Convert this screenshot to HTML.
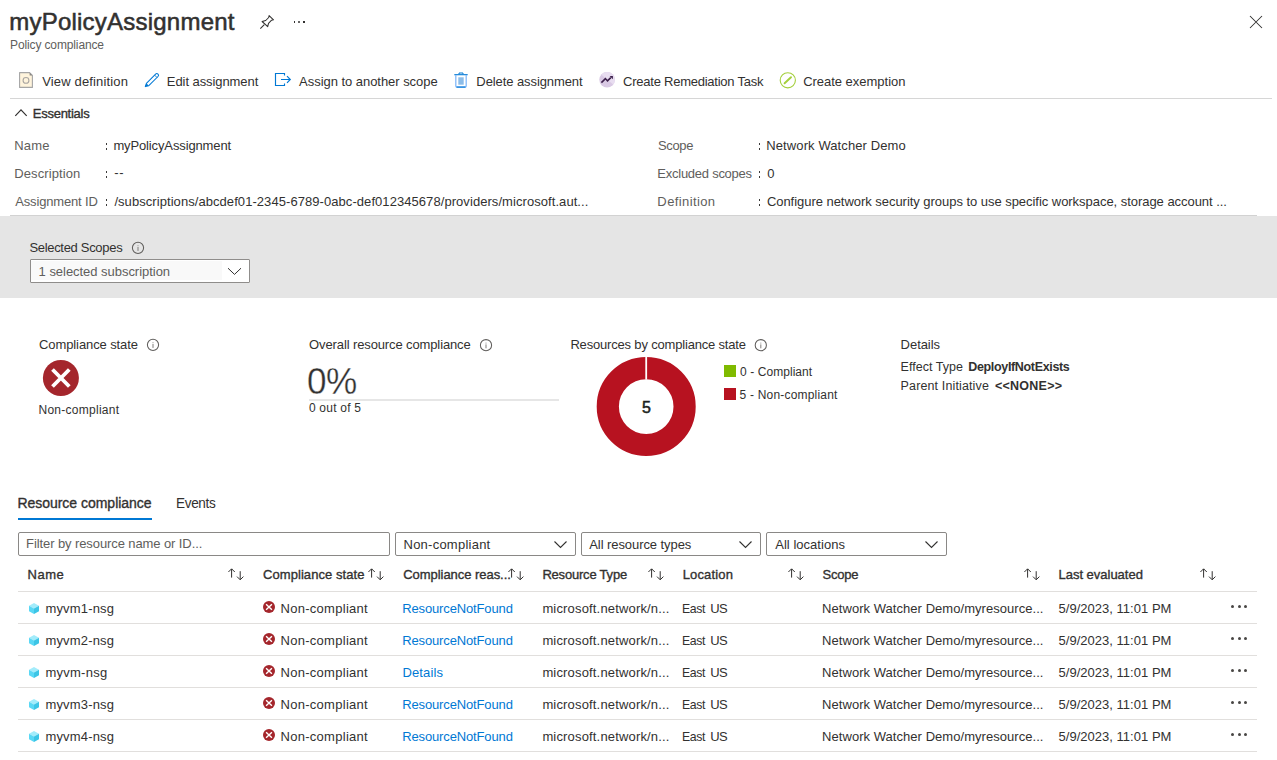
<!DOCTYPE html>
<html><head><meta charset="utf-8">
<style>
html,body{margin:0;padding:0;background:#fff;}
body{width:1277px;height:760px;position:relative;overflow:hidden;font-family:"Liberation Sans",sans-serif;}
.t{position:absolute;white-space:nowrap;line-height:1;transform-origin:0 0;}
.sb{-webkit-text-stroke:0.35px currentColor;}
.b{font-weight:bold;}
.l{-webkit-text-stroke:0.35px #fff;}
.sb2{-webkit-text-stroke:0.55px currentColor;}
.a{position:absolute;}
svg{position:absolute;overflow:visible;}
</style></head><body>
<!-- backgrounds & lines -->
<div class="a" style="left:0;top:216px;width:1277px;height:82px;background:#e5e5e5"></div>
<div class="a" style="left:10px;top:98px;width:1262px;height:1px;background:#d6d6d6"></div>
<div class="a" style="left:10px;top:215px;width:1247px;height:1px;background:#d2d2d2"></div>

<!-- title icons -->
<svg style="left:258px;top:13px" width="18" height="18" viewBox="0 0 18 18">
 <path d="M2.3 15.6 L6.3 11.6" stroke="#323130" stroke-width="1.05" fill="none"/>
 <path d="M4.1 8.5 L7.7 7.5 L10.7 4.5 L11.1 2.6 L15.5 6.8 L13.6 7.2 L10.5 10.3 L9.7 13.7 Z" stroke="#323130" stroke-width="1.05" fill="none" stroke-linejoin="round"/>
</svg>
<div class="a" style="left:293.8px;top:21px;width:1.6px;height:2.2px;background:#323130"></div>
<div class="a" style="left:298.3px;top:21px;width:1.8px;height:2.2px;background:#666"></div>
<div class="a" style="left:303px;top:21px;width:1.6px;height:2.2px;background:#323130"></div>
<svg style="left:1249px;top:15px" width="14" height="14" viewBox="0 0 14 14">
 <path d="M1 1 L13 13 M13 1 L1 13" stroke="#323130" stroke-width="1.05" fill="none"/>
</svg>

<!-- toolbar icons -->
<svg style="left:19px;top:72px" width="14" height="16" viewBox="0 0 14 16">
 <path d="M0.6 0.6 H10.6 L13.4 3.4 V15.4 H0.6 Z" fill="#fff4dc" stroke="#a5a5a5" stroke-width="1.1" stroke-linejoin="round"/>
 <path d="M10.6 0.6 L13.4 3.4 H10.6 Z" fill="#8a8886"/>
 <circle cx="7" cy="8.4" r="2.9" fill="none" stroke="#aaa6a2" stroke-width="1.1"/>
</svg>
<svg style="left:144px;top:72px" width="16" height="16" viewBox="0 0 16 16">
 <path d="M1.3 14.6 L2.4 11.3 L11.6 2.1 A1.55 1.55 0 0 1 14 4.5 L4.8 13.7 Z" fill="none" stroke="#0078d4" stroke-width="1.05" stroke-linejoin="round"/>
 <path d="M10.6 3.1 L13 5.5" stroke="#0078d4" stroke-width="0.9"/>
 <path d="M2.4 11.3 L4.8 13.7 L1.3 14.6 Z" fill="#0078d4"/>
</svg>
<svg style="left:274px;top:72px" width="18" height="15" viewBox="0 0 18 15">
 <path d="M10.5 3.5 V1.5 H1.5 V13.5 H10.5 V11.5" fill="none" stroke="#0078d4" stroke-width="1.15"/>
 <path d="M7 7.5 H16.3 M13 4.2 L16.3 7.5 L13 10.8" fill="none" stroke="#0078d4" stroke-width="1.15"/>
</svg>
<svg style="left:454px;top:72px" width="14" height="17" viewBox="0 0 14 17">
 <path d="M5 2.2 V1 H9 V2.2" fill="none" stroke="#0078d4" stroke-width="1"/>
 <path d="M0.3 2.7 H13.7" stroke="#0078d4" stroke-width="1.1"/>
 <path d="M1.8 3 V14 Q1.8 15 2.8 15 H11.2 Q12.2 15 12.2 14 V3" fill="none" stroke="#83b9f9" stroke-width="1.3"/>
 <path d="M2.5 15.1 H11.5" stroke="#0078d4" stroke-width="1.1"/>
 <rect x="4.3" y="5.3" width="5.4" height="7.4" fill="#8cbce8"/>
</svg>
<svg style="left:599px;top:72px" width="17" height="17" viewBox="0 0 17 17">
 <defs><clipPath id="rcc"><circle cx="8.1" cy="7.8" r="7.8"/></clipPath></defs>
 <circle cx="8.1" cy="7.8" r="7.8" fill="#d9c9e4"/>
 <path d="M-1 0.06 L17 14.7 L17 -1 L-1 -1 Z" fill="#e8ddf0" clip-path="url(#rcc)"/>
 <path d="M2.4 10.6 L6.4 6.6 L8.5 8.9 L11.8 5.6" fill="none" stroke="#3b1f4a" stroke-width="1.55"/>
 <path d="M10.6 4 H13.9 V7.3 Z" fill="#3b1f4a"/>
</svg>
<svg style="left:779px;top:72px" width="18" height="17" viewBox="0 0 18 17">
 <circle cx="8.8" cy="8.3" r="7.6" fill="none" stroke="#a4cf3c" stroke-width="1.1"/>
 <path d="M5.6 11.3 L12 5.2" stroke="#a4cf3c" stroke-width="1.9" stroke-linecap="round"/>
</svg>

<!-- essentials chevron -->
<svg style="left:14px;top:108px" width="14" height="9" viewBox="0 0 14 9">
 <path d="M1.3 7.8 L7 1.8 L12.7 7.8" fill="none" stroke="#323130" stroke-width="1.2"/>
</svg>

<!-- selected scopes dropdown -->
<div class="a" style="left:30px;top:259px;width:218px;height:22px;border:1px solid #8f8d8b;background:#fff;border-radius:1px"></div>
<div class="a" style="left:31px;top:261px;width:191px;height:19px;background:#f9f9f9"></div>
<svg style="left:227px;top:267px" width="16" height="10" viewBox="0 0 16 10">
 <path d="M1 1.2 L7.5 7.4 L14 1.2" fill="none" stroke="#323130" stroke-width="1"/>
</svg>

<!-- info icons -->
<svg style="left:131px;top:241px" width="14" height="14" viewBox="0 0 14 14"><circle cx="7" cy="6.8" r="5.6" fill="none" stroke="#605e5c" stroke-width="1.05"/><rect x="6.45" y="6" width="1.1" height="3.9" fill="#8a8886"/><rect x="6.45" y="4.2" width="1.1" height="1" fill="#a19f9d"/></svg>
<svg style="left:146px;top:338px" width="14" height="14" viewBox="0 0 14 14"><circle cx="7" cy="6.8" r="5.6" fill="none" stroke="#605e5c" stroke-width="1.05"/><rect x="6.45" y="6" width="1.1" height="3.9" fill="#8a8886"/><rect x="6.45" y="4.2" width="1.1" height="1" fill="#a19f9d"/></svg>
<svg style="left:479px;top:338px" width="14" height="14" viewBox="0 0 14 14"><circle cx="7" cy="7.2" r="5.6" fill="none" stroke="#605e5c" stroke-width="1.05"/><rect x="6.45" y="6.4" width="1.1" height="3.9" fill="#8a8886"/><rect x="6.45" y="4.6" width="1.1" height="1" fill="#a19f9d"/></svg>
<svg style="left:754px;top:338px" width="14" height="14" viewBox="0 0 14 14"><circle cx="6.8" cy="7.2" r="5.6" fill="none" stroke="#605e5c" stroke-width="1.05"/><rect x="6.25" y="6.4" width="1.1" height="3.9" fill="#8a8886"/><rect x="6.25" y="4.6" width="1.1" height="1" fill="#a19f9d"/></svg>

<!-- compliance state big icon -->
<svg style="left:42px;top:360px" width="38" height="38" viewBox="0 0 38 38">
 <circle cx="18.9" cy="18" r="18" fill="#a4262c"/>
 <path d="M10.5 9.5 L27.3 26.5 M27.3 9.5 L10.5 26.5" stroke="#fff" stroke-width="3.8"/>
</svg>

<!-- progress track -->
<div class="a" style="left:309px;top:399px;width:250px;height:2px;background:#e6e6e6"></div>

<!-- donut -->
<svg style="left:596px;top:357px" width="101" height="101" viewBox="0 0 101 101">
 <circle cx="50.2" cy="49.6" r="38.4" fill="none" stroke="#b71220" stroke-width="22.2"/>
 <rect x="49.3" y="0" width="1.8" height="22.6" fill="#fff"/>
</svg>

<!-- legend -->
<div class="a" style="left:724px;top:365px;width:12px;height:12px;background:#7fba00"></div>
<div class="a" style="left:724px;top:388px;width:12px;height:12px;background:#b71220"></div>

<!-- tabs -->
<div class="a" style="left:18px;top:518px;width:134px;height:2px;background:#0078d4"></div>

<!-- filters -->
<div class="a" style="left:18px;top:532px;width:370px;height:22px;border:1px solid #8a8886;border-radius:2px"></div>
<div class="a" style="left:395px;top:532px;width:179px;height:22px;border:1px solid #8a8886;border-radius:2px"></div>
<div class="a" style="left:581px;top:532px;width:178px;height:22px;border:1px solid #8a8886;border-radius:2px"></div>
<div class="a" style="left:766px;top:532px;width:179px;height:22px;border:1px solid #8a8886;border-radius:2px"></div>
<svg style="left:554px;top:541px" width="14" height="8" viewBox="0 0 14 8"><path d="M0.5 0.5 L6.5 6.5 L12.5 0.5" fill="none" stroke="#323130" stroke-width="1.1"/></svg>
<svg style="left:739px;top:541px" width="14" height="8" viewBox="0 0 14 8"><path d="M0.5 0.5 L6.5 6.5 L12.5 0.5" fill="none" stroke="#323130" stroke-width="1.1"/></svg>
<svg style="left:925px;top:541px" width="14" height="8" viewBox="0 0 14 8"><path d="M0.5 0.5 L6.5 6.5 L12.5 0.5" fill="none" stroke="#323130" stroke-width="1.1"/></svg>
<!-- table -->
<div class="a" style="left:18px;top:591px;width:1239px;height:1px;background:#e1dfdd"></div>
<div class="a" style="left:18px;top:623px;width:1239px;height:1px;background:#e1dfdd"></div>
<div class="a" style="left:18px;top:655px;width:1239px;height:1px;background:#e1dfdd"></div>
<div class="a" style="left:18px;top:687px;width:1239px;height:1px;background:#e1dfdd"></div>
<div class="a" style="left:18px;top:719px;width:1239px;height:1px;background:#e1dfdd"></div>
<div class="a" style="left:18px;top:751px;width:1239px;height:1px;background:#e1dfdd"></div>
<svg style="left:228.1px;top:568px" width="17" height="14" viewBox="0 0 17 14"><path d="M3.6 9.6 V1 M0.4 4 L3.6 0.8 L6.8 4" fill="none" stroke="#323130" stroke-width="1"/><path d="M12.2 3.2 V11.6 M9 8.6 L12.2 11.8 L15.4 8.6" fill="none" stroke="#323130" stroke-width="1"/></svg>
<svg style="left:368.1px;top:568px" width="17" height="14" viewBox="0 0 17 14"><path d="M3.6 9.6 V1 M0.4 4 L3.6 0.8 L6.8 4" fill="none" stroke="#323130" stroke-width="1"/><path d="M12.2 3.2 V11.6 M9 8.6 L12.2 11.8 L15.4 8.6" fill="none" stroke="#323130" stroke-width="1"/></svg>
<svg style="left:508.1px;top:568px" width="17" height="14" viewBox="0 0 17 14"><path d="M3.6 9.6 V1 M0.4 4 L3.6 0.8 L6.8 4" fill="none" stroke="#323130" stroke-width="1"/><path d="M12.2 3.2 V11.6 M9 8.6 L12.2 11.8 L15.4 8.6" fill="none" stroke="#323130" stroke-width="1"/></svg>
<svg style="left:648.1px;top:568px" width="17" height="14" viewBox="0 0 17 14"><path d="M3.6 9.6 V1 M0.4 4 L3.6 0.8 L6.8 4" fill="none" stroke="#323130" stroke-width="1"/><path d="M12.2 3.2 V11.6 M9 8.6 L12.2 11.8 L15.4 8.6" fill="none" stroke="#323130" stroke-width="1"/></svg>
<svg style="left:788.1px;top:568px" width="17" height="14" viewBox="0 0 17 14"><path d="M3.6 9.6 V1 M0.4 4 L3.6 0.8 L6.8 4" fill="none" stroke="#323130" stroke-width="1"/><path d="M12.2 3.2 V11.6 M9 8.6 L12.2 11.8 L15.4 8.6" fill="none" stroke="#323130" stroke-width="1"/></svg>
<svg style="left:1024.1px;top:568px" width="17" height="14" viewBox="0 0 17 14"><path d="M3.6 9.6 V1 M0.4 4 L3.6 0.8 L6.8 4" fill="none" stroke="#323130" stroke-width="1"/><path d="M12.2 3.2 V11.6 M9 8.6 L12.2 11.8 L15.4 8.6" fill="none" stroke="#323130" stroke-width="1"/></svg>
<svg style="left:1200.1px;top:568px" width="17" height="14" viewBox="0 0 17 14"><path d="M3.6 9.6 V1 M0.4 4 L3.6 0.8 L6.8 4" fill="none" stroke="#323130" stroke-width="1"/><path d="M12.2 3.2 V11.6 M9 8.6 L12.2 11.8 L15.4 8.6" fill="none" stroke="#323130" stroke-width="1"/></svg>
<svg style="left:28px;top:602px" width="12" height="13" viewBox="0 0 12 13"><path d="M6 1 L11 3.8 L6 6.6 L1 3.8 Z" fill="#a3ecfb"/><path d="M1 3.8 L6 6.6 V12 L1 9.2 Z" fill="#5ad8f5"/><path d="M11 3.8 L6 6.6 V12 L11 9.2 Z" fill="#3cc5e6"/></svg>
<svg style="left:263px;top:601px" width="13" height="13" viewBox="0 0 13 13"><circle cx="6" cy="6" r="6" fill="#a4262c"/><path d="M3.1 3.3 L8.9 8.7 M8.9 3.3 L3.1 8.7" stroke="#fff" stroke-width="1.45"/></svg>
<div class="a" style="left:1231.2px;top:605px;width:3px;height:3px;border-radius:1.5px;background:#484644"></div>
<div class="a" style="left:1237.5px;top:605px;width:3px;height:3px;border-radius:1.5px;background:#484644"></div>
<div class="a" style="left:1243.8px;top:605px;width:3px;height:3px;border-radius:1.5px;background:#484644"></div>
<svg style="left:28px;top:634px" width="12" height="13" viewBox="0 0 12 13"><path d="M6 1 L11 3.8 L6 6.6 L1 3.8 Z" fill="#a3ecfb"/><path d="M1 3.8 L6 6.6 V12 L1 9.2 Z" fill="#5ad8f5"/><path d="M11 3.8 L6 6.6 V12 L11 9.2 Z" fill="#3cc5e6"/></svg>
<svg style="left:263px;top:633px" width="13" height="13" viewBox="0 0 13 13"><circle cx="6" cy="6" r="6" fill="#a4262c"/><path d="M3.1 3.3 L8.9 8.7 M8.9 3.3 L3.1 8.7" stroke="#fff" stroke-width="1.45"/></svg>
<div class="a" style="left:1231.2px;top:637px;width:3px;height:3px;border-radius:1.5px;background:#484644"></div>
<div class="a" style="left:1237.5px;top:637px;width:3px;height:3px;border-radius:1.5px;background:#484644"></div>
<div class="a" style="left:1243.8px;top:637px;width:3px;height:3px;border-radius:1.5px;background:#484644"></div>
<svg style="left:28px;top:666px" width="12" height="13" viewBox="0 0 12 13"><path d="M6 1 L11 3.8 L6 6.6 L1 3.8 Z" fill="#a3ecfb"/><path d="M1 3.8 L6 6.6 V12 L1 9.2 Z" fill="#5ad8f5"/><path d="M11 3.8 L6 6.6 V12 L11 9.2 Z" fill="#3cc5e6"/></svg>
<svg style="left:263px;top:665px" width="13" height="13" viewBox="0 0 13 13"><circle cx="6" cy="6" r="6" fill="#a4262c"/><path d="M3.1 3.3 L8.9 8.7 M8.9 3.3 L3.1 8.7" stroke="#fff" stroke-width="1.45"/></svg>
<div class="a" style="left:1231.2px;top:669px;width:3px;height:3px;border-radius:1.5px;background:#484644"></div>
<div class="a" style="left:1237.5px;top:669px;width:3px;height:3px;border-radius:1.5px;background:#484644"></div>
<div class="a" style="left:1243.8px;top:669px;width:3px;height:3px;border-radius:1.5px;background:#484644"></div>
<svg style="left:28px;top:698px" width="12" height="13" viewBox="0 0 12 13"><path d="M6 1 L11 3.8 L6 6.6 L1 3.8 Z" fill="#a3ecfb"/><path d="M1 3.8 L6 6.6 V12 L1 9.2 Z" fill="#5ad8f5"/><path d="M11 3.8 L6 6.6 V12 L11 9.2 Z" fill="#3cc5e6"/></svg>
<svg style="left:263px;top:697px" width="13" height="13" viewBox="0 0 13 13"><circle cx="6" cy="6" r="6" fill="#a4262c"/><path d="M3.1 3.3 L8.9 8.7 M8.9 3.3 L3.1 8.7" stroke="#fff" stroke-width="1.45"/></svg>
<div class="a" style="left:1231.2px;top:701px;width:3px;height:3px;border-radius:1.5px;background:#484644"></div>
<div class="a" style="left:1237.5px;top:701px;width:3px;height:3px;border-radius:1.5px;background:#484644"></div>
<div class="a" style="left:1243.8px;top:701px;width:3px;height:3px;border-radius:1.5px;background:#484644"></div>
<svg style="left:28px;top:730px" width="12" height="13" viewBox="0 0 12 13"><path d="M6 1 L11 3.8 L6 6.6 L1 3.8 Z" fill="#a3ecfb"/><path d="M1 3.8 L6 6.6 V12 L1 9.2 Z" fill="#5ad8f5"/><path d="M11 3.8 L6 6.6 V12 L11 9.2 Z" fill="#3cc5e6"/></svg>
<svg style="left:263px;top:729px" width="13" height="13" viewBox="0 0 13 13"><circle cx="6" cy="6" r="6" fill="#a4262c"/><path d="M3.1 3.3 L8.9 8.7 M8.9 3.3 L3.1 8.7" stroke="#fff" stroke-width="1.45"/></svg>
<div class="a" style="left:1231.2px;top:733px;width:3px;height:3px;border-radius:1.5px;background:#484644"></div>
<div class="a" style="left:1237.5px;top:733px;width:3px;height:3px;border-radius:1.5px;background:#484644"></div>
<div class="a" style="left:1243.8px;top:733px;width:3px;height:3px;border-radius:1.5px;background:#484644"></div>
<!-- colons -->
<div class="a" style="left:105.7px;top:142.7px;width:1.2px;height:2px;background:#3b3a39"></div>
<div class="a" style="left:105.7px;top:147.7px;width:1.2px;height:2px;background:#3b3a39"></div>
<div class="a" style="left:759.3px;top:142.7px;width:1.2px;height:2px;background:#3b3a39"></div>
<div class="a" style="left:759.3px;top:147.7px;width:1.2px;height:2px;background:#3b3a39"></div>
<div class="a" style="left:105.7px;top:170.9px;width:1.2px;height:2px;background:#3b3a39"></div>
<div class="a" style="left:105.7px;top:175.9px;width:1.2px;height:2px;background:#3b3a39"></div>
<div class="a" style="left:759.3px;top:170.9px;width:1.2px;height:2px;background:#3b3a39"></div>
<div class="a" style="left:759.3px;top:175.9px;width:1.2px;height:2px;background:#3b3a39"></div>
<div class="a" style="left:105.7px;top:199.1px;width:1.2px;height:2px;background:#3b3a39"></div>
<div class="a" style="left:105.7px;top:204.1px;width:1.2px;height:2px;background:#3b3a39"></div>
<div class="a" style="left:759.3px;top:199.1px;width:1.2px;height:2px;background:#3b3a39"></div>
<div class="a" style="left:759.3px;top:204.1px;width:1.2px;height:2px;background:#3b3a39"></div>

<div id="t0" class="t sb2" style="left:9.24px;top:9.68px;font-size:24px;color:#323130;letter-spacing:0.224px">myPolicyAssignment</div>
<div id="t1" class="t" style="left:10.00px;top:39.14px;font-size:12px;color:#605e5c;letter-spacing:-0.125px">Policy compliance</div>
<div id="t2" class="t" style="left:42.24px;top:75.00px;font-size:13px;color:#323130;letter-spacing:0.150px">View definition</div>
<div id="t3" class="t" style="left:166.86px;top:75.00px;font-size:13px;color:#323130;letter-spacing:-0.079px">Edit assignment</div>
<div id="t4" class="t" style="left:299.12px;top:75.00px;font-size:13px;color:#323130;letter-spacing:-0.041px">Assign to another scope</div>
<div id="t5" class="t" style="left:476.36px;top:75.00px;font-size:13px;color:#323130;letter-spacing:-0.088px">Delete assignment</div>
<div id="t6" class="t" style="left:623.10px;top:75.00px;font-size:13px;color:#323130;letter-spacing:-0.245px">Create Remediation Task</div>
<div id="t7" class="t" style="left:803.14px;top:75.00px;font-size:13px;color:#323130;letter-spacing:-0.020px">Create exemption</div>
<div id="t8" class="t sb" style="left:32.76px;top:106.90px;font-size:13px;color:#323130;letter-spacing:-0.256px">Essentials</div>
<div id="t9" class="t" style="left:14.24px;top:138.70px;font-size:13px;color:#605e5c;letter-spacing:0.200px">Name</div>
<div id="t10" class="t" style="left:14.24px;top:166.90px;font-size:13px;color:#605e5c;letter-spacing:0.100px">Description</div>
<div id="t11" class="t" style="left:15.24px;top:195.10px;font-size:13px;color:#605e5c;letter-spacing:-0.158px">Assignment ID</div>
<div id="t12" class="t" style="left:657.76px;top:138.70px;font-size:13px;color:#605e5c;letter-spacing:-0.351px;transform:scaleX(0.9972)">Scope</div>
<div id="t13" class="t" style="left:657.36px;top:166.90px;font-size:13px;color:#605e5c;letter-spacing:-0.257px">Excluded scopes</div>
<div id="t14" class="t" style="left:657.36px;top:195.10px;font-size:13px;color:#605e5c;letter-spacing:0.389px">Definition</div>
<div id="t15" class="t" style="left:113.38px;top:138.70px;font-size:13px;color:#323130;letter-spacing:-0.129px">myPolicyAssignment</div>
<div id="t16" class="t" style="left:114.30px;top:165.90px;font-size:13px;color:#323130;letter-spacing:0.600px">--</div>
<div id="t17" class="t" style="left:114.38px;top:195.10px;font-size:13px;color:#323130;letter-spacing:0.064px">/subscriptions/abcdef01-2345-6789-0abc-def012345678/providers/microsoft.aut...</div>
<div id="t18" class="t" style="left:766.28px;top:138.70px;font-size:13px;color:#323130;letter-spacing:0.105px">Network Watcher Demo</div>
<div id="t19" class="t" style="left:767.14px;top:166.90px;font-size:13px;color:#323130">0</div>
<div id="t20" class="t" style="left:766.88px;top:195.10px;font-size:13px;color:#323130;letter-spacing:-0.039px">Configure network security groups to use specific workspace, storage account ...</div>
<div id="t21" class="t" style="left:29.38px;top:241.20px;font-size:13px;color:#323130;letter-spacing:-0.307px">Selected Scopes</div>
<div id="t22" class="t" style="left:38.62px;top:265.00px;font-size:13px;color:#605e5c;letter-spacing:-0.036px">1 selected subscription</div>
<div id="t23" class="t" style="left:39.10px;top:338.00px;font-size:13px;color:#323130;letter-spacing:-0.107px">Compliance state</div>
<div id="t24" class="t" style="left:309.10px;top:338.00px;font-size:13px;color:#323130;letter-spacing:-0.119px">Overall resource compliance</div>
<div id="t25" class="t" style="left:570.38px;top:338.00px;font-size:13px;color:#323130;letter-spacing:-0.179px">Resources by compliance state</div>
<div id="t26" class="t" style="left:900.62px;top:337.80px;font-size:13px;color:#323130;letter-spacing:-0.050px">Details</div>
<div id="t27" class="t" style="left:38.50px;top:403.74px;font-size:12px;color:#323130;letter-spacing:0.267px">Non-compliant</div>
<div id="t28" class="t l" style="left:307.36px;top:364.00px;font-size:36.5px;color:#323130;letter-spacing:-0.436px;transform:scaleX(0.9621)">0%</div>
<div id="t29" class="t" style="left:308.90px;top:401.84px;font-size:12px;color:#323130;letter-spacing:0.233px">0 out of 5</div>
<div id="t30" class="t" style="left:740.12px;top:366.04px;font-size:12px;color:#323130;letter-spacing:0.058px">0 - Compliant</div>
<div id="t31" class="t" style="left:739.52px;top:388.59px;font-size:12px;color:#323130;letter-spacing:0.200px">5 - Non-compliant</div>
<div id="t32" class="t" style="left:900.62px;top:361.12px;font-size:12.5px;color:#323130;letter-spacing:0.020px">Effect Type</div>
<div id="t33" class="t b" style="left:968.26px;top:361.12px;font-size:12.5px;color:#323130;letter-spacing:-0.337px">DeployIfNotExists</div>
<div id="t34" class="t" style="left:900.62px;top:379.72px;font-size:12.5px;color:#323130;letter-spacing:0.131px">Parent Initiative</div>
<div id="t35" class="t b" style="left:995.02px;top:379.72px;font-size:12.5px;color:#323130;letter-spacing:0.243px">&lt;&lt;NONE&gt;&gt;</div>
<div id="t36" class="t sb2" style="left:641.98px;top:400.46px;font-size:16px;color:#201f1e">5</div>
<div id="t37" class="t sb" style="left:17.38px;top:495.85px;font-size:14px;color:#323130;letter-spacing:-0.022px">Resource compliance</div>
<div id="t38" class="t" style="left:175.88px;top:495.85px;font-size:14px;color:#323130;letter-spacing:-0.353px;transform:scaleX(0.9691)">Events</div>
<div id="t39" class="t" style="left:26.12px;top:536.90px;font-size:13px;color:#605e5c;letter-spacing:-0.097px">Filter by resource name or ID...</div>
<div id="t40" class="t" style="left:403.50px;top:537.80px;font-size:13px;color:#323130;letter-spacing:0.242px">Non-compliant</div>
<div id="t41" class="t" style="left:589.28px;top:537.80px;font-size:13px;color:#323130;letter-spacing:-0.076px">All resource types</div>
<div id="t42" class="t" style="left:775.28px;top:537.80px;font-size:13px;color:#323130;letter-spacing:0.025px">All locations</div>
<div id="t43" class="t sb" style="left:27.62px;top:568.30px;font-size:13px;color:#323130;letter-spacing:0.467px">Name</div>
<div id="t44" class="t sb" style="left:262.98px;top:568.30px;font-size:13px;color:#323130;letter-spacing:0.073px">Compliance state</div>
<div id="t45" class="t sb" style="left:403.24px;top:568.30px;font-size:13px;color:#323130;letter-spacing:-0.044px">Compliance reas...</div>
<div id="t46" class="t sb" style="left:542.38px;top:568.30px;font-size:13px;color:#323130;letter-spacing:-0.200px">Resource Type</div>
<div id="t47" class="t sb" style="left:682.64px;top:568.30px;font-size:13px;color:#323130;letter-spacing:0.157px">Location</div>
<div id="t48" class="t sb" style="left:822.52px;top:568.30px;font-size:13px;color:#323130;letter-spacing:-0.220px">Scope</div>
<div id="t49" class="t sb" style="left:1058.50px;top:568.30px;font-size:13px;color:#323130;letter-spacing:-0.015px">Last evaluated</div>
<div id="t50" class="t" style="left:45.38px;top:602.20px;font-size:13px;color:#323130;letter-spacing:0.175px">myvm1-nsg</div>
<div id="t51" class="t" style="left:280.50px;top:602.20px;font-size:13px;color:#323130;letter-spacing:0.283px">Non-compliant</div>
<div id="t52" class="t" style="left:402.24px;top:602.20px;font-size:13px;color:#0078d4;letter-spacing:-0.140px">ResourceNotFound</div>
<div id="t53" class="t" style="left:542.38px;top:602.20px;font-size:13px;color:#323130;letter-spacing:0.167px">microsoft.network/n...</div>
<div id="t54" class="t" style="left:682.40px;top:602.20px;font-size:13px;color:#323130;letter-spacing:-0.368px;transform:scaleX(0.9426)">East</div>
<div id="t55" class="t" style="left:710.20px;top:602.20px;font-size:13px;color:#323130;letter-spacing:-0.700px">US</div>
<div id="t56" class="t" style="left:822.12px;top:602.20px;font-size:13px;color:#323130;letter-spacing:0.045px">Network Watcher Demo/myresource...</div>
<div id="t57" class="t" style="left:1058.50px;top:602.20px;font-size:13px;color:#323130;letter-spacing:0.024px">5/9/2023, 11:01 PM</div>
<div id="t58" class="t" style="left:45.38px;top:634.20px;font-size:13px;color:#323130;letter-spacing:0.175px">myvm2-nsg</div>
<div id="t59" class="t" style="left:280.50px;top:634.20px;font-size:13px;color:#323130;letter-spacing:0.283px">Non-compliant</div>
<div id="t60" class="t" style="left:402.24px;top:634.20px;font-size:13px;color:#0078d4;letter-spacing:-0.140px">ResourceNotFound</div>
<div id="t61" class="t" style="left:542.38px;top:634.20px;font-size:13px;color:#323130;letter-spacing:0.167px">microsoft.network/n...</div>
<div id="t62" class="t" style="left:682.40px;top:634.20px;font-size:13px;color:#323130;letter-spacing:-0.368px;transform:scaleX(0.9426)">East</div>
<div id="t63" class="t" style="left:710.20px;top:634.20px;font-size:13px;color:#323130;letter-spacing:-0.700px">US</div>
<div id="t64" class="t" style="left:822.12px;top:634.20px;font-size:13px;color:#323130;letter-spacing:0.045px">Network Watcher Demo/myresource...</div>
<div id="t65" class="t" style="left:1058.50px;top:634.20px;font-size:13px;color:#323130;letter-spacing:0.024px">5/9/2023, 11:01 PM</div>
<div id="t66" class="t" style="left:45.38px;top:666.20px;font-size:13px;color:#323130;letter-spacing:0.271px">myvm-nsg</div>
<div id="t67" class="t" style="left:280.50px;top:666.20px;font-size:13px;color:#323130;letter-spacing:0.283px">Non-compliant</div>
<div id="t68" class="t" style="left:402.50px;top:666.20px;font-size:13px;color:#0078d4;letter-spacing:0.117px">Details</div>
<div id="t69" class="t" style="left:542.38px;top:666.20px;font-size:13px;color:#323130;letter-spacing:0.167px">microsoft.network/n...</div>
<div id="t70" class="t" style="left:682.40px;top:666.20px;font-size:13px;color:#323130;letter-spacing:-0.368px;transform:scaleX(0.9426)">East</div>
<div id="t71" class="t" style="left:710.20px;top:666.20px;font-size:13px;color:#323130;letter-spacing:-0.700px">US</div>
<div id="t72" class="t" style="left:822.12px;top:666.20px;font-size:13px;color:#323130;letter-spacing:0.045px">Network Watcher Demo/myresource...</div>
<div id="t73" class="t" style="left:1058.50px;top:666.20px;font-size:13px;color:#323130;letter-spacing:0.024px">5/9/2023, 11:01 PM</div>
<div id="t74" class="t" style="left:45.38px;top:698.20px;font-size:13px;color:#323130;letter-spacing:0.175px">myvm3-nsg</div>
<div id="t75" class="t" style="left:280.50px;top:698.20px;font-size:13px;color:#323130;letter-spacing:0.283px">Non-compliant</div>
<div id="t76" class="t" style="left:402.24px;top:698.20px;font-size:13px;color:#0078d4;letter-spacing:-0.140px">ResourceNotFound</div>
<div id="t77" class="t" style="left:542.38px;top:698.20px;font-size:13px;color:#323130;letter-spacing:0.167px">microsoft.network/n...</div>
<div id="t78" class="t" style="left:682.40px;top:698.20px;font-size:13px;color:#323130;letter-spacing:-0.368px;transform:scaleX(0.9426)">East</div>
<div id="t79" class="t" style="left:710.20px;top:698.20px;font-size:13px;color:#323130;letter-spacing:-0.700px">US</div>
<div id="t80" class="t" style="left:822.12px;top:698.20px;font-size:13px;color:#323130;letter-spacing:0.045px">Network Watcher Demo/myresource...</div>
<div id="t81" class="t" style="left:1058.50px;top:698.20px;font-size:13px;color:#323130;letter-spacing:0.024px">5/9/2023, 11:01 PM</div>
<div id="t82" class="t" style="left:45.38px;top:730.20px;font-size:13px;color:#323130;letter-spacing:0.175px">myvm4-nsg</div>
<div id="t83" class="t" style="left:280.50px;top:730.20px;font-size:13px;color:#323130;letter-spacing:0.283px">Non-compliant</div>
<div id="t84" class="t" style="left:402.24px;top:730.20px;font-size:13px;color:#0078d4;letter-spacing:-0.140px">ResourceNotFound</div>
<div id="t85" class="t" style="left:542.38px;top:730.20px;font-size:13px;color:#323130;letter-spacing:0.167px">microsoft.network/n...</div>
<div id="t86" class="t" style="left:682.40px;top:730.20px;font-size:13px;color:#323130;letter-spacing:-0.368px;transform:scaleX(0.9426)">East</div>
<div id="t87" class="t" style="left:710.20px;top:730.20px;font-size:13px;color:#323130;letter-spacing:-0.700px">US</div>
<div id="t88" class="t" style="left:822.12px;top:730.20px;font-size:13px;color:#323130;letter-spacing:0.045px">Network Watcher Demo/myresource...</div>
<div id="t89" class="t" style="left:1058.50px;top:730.20px;font-size:13px;color:#323130;letter-spacing:0.024px">5/9/2023, 11:01 PM</div>
</body></html>
